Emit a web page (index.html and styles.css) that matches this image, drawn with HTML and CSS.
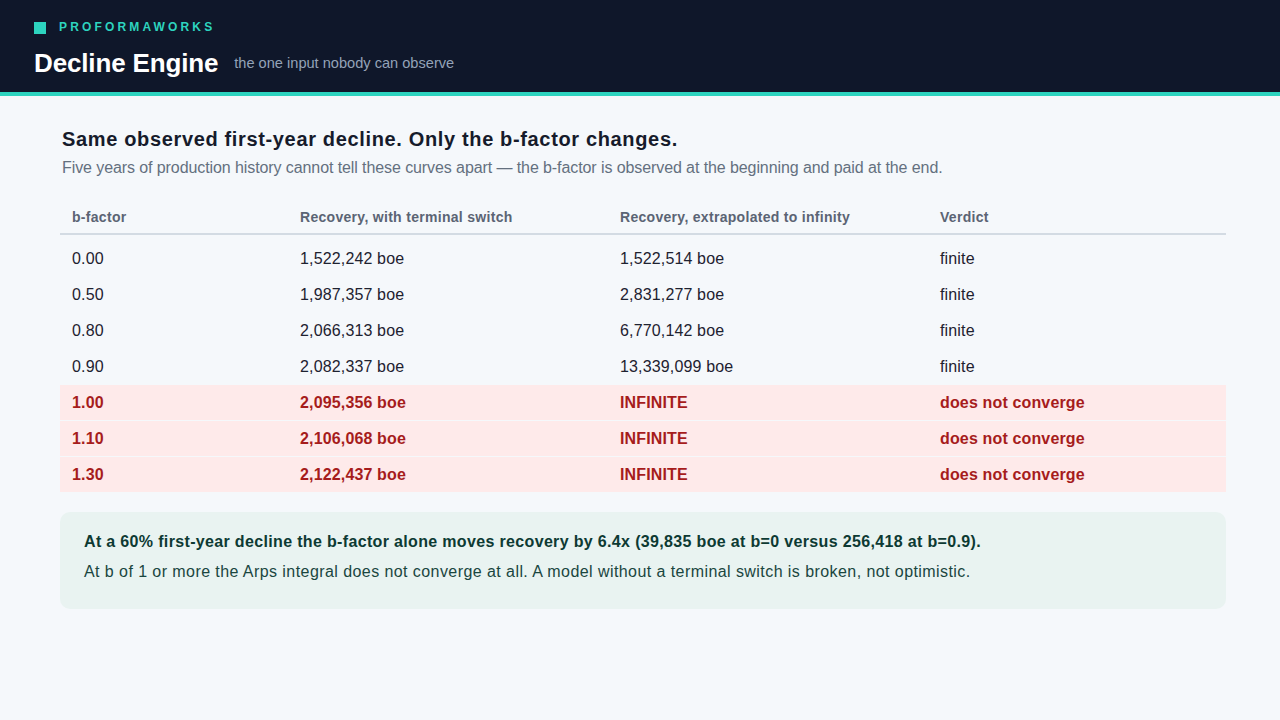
FILE: index.html
```html
<!DOCTYPE html>
<html lang="en">
<head>
<meta charset="utf-8">
<title>Decline Engine</title>
<link rel="stylesheet" href="styles.css">
</head>
<body>
<header class="topbar">
  <div class="brand">
    <span class="brand-mark"></span>
    <span class="brand-name">PROFORMAWORKS</span>
  </div>
  <div class="title-row">
    <h1 class="app-title">Decline Engine</h1>
    <span class="app-tagline">the one input nobody can observe</span>
  </div>
</header>

<main class="content">
  <h2 class="section-title">Same observed first-year decline. Only the b-factor changes.</h2>
  <p class="section-sub">Five years of production history cannot tell these curves apart — the b-factor is observed at the beginning and paid at the end.</p>

  <table class="data">
    <colgroup>
      <col class="c1"><col class="c2"><col class="c3"><col class="c4">
    </colgroup>
    <thead>
      <tr>
        <th>b-factor</th>
        <th>Recovery, with terminal switch</th>
        <th>Recovery, extrapolated to infinity</th>
        <th>Verdict</th>
      </tr>
    </thead>
    <tbody>
      <tr><td>0.00</td><td>1,522,242 boe</td><td>1,522,514 boe</td><td>finite</td></tr>
      <tr><td>0.50</td><td>1,987,357 boe</td><td>2,831,277 boe</td><td>finite</td></tr>
      <tr><td>0.80</td><td>2,066,313 boe</td><td>6,770,142 boe</td><td>finite</td></tr>
      <tr><td>0.90</td><td>2,082,337 boe</td><td>13,339,099 boe</td><td>finite</td></tr>
      <tr class="bad"><td>1.00</td><td>2,095,356 boe</td><td>INFINITE</td><td>does not converge</td></tr>
      <tr class="bad"><td>1.10</td><td>2,106,068 boe</td><td>INFINITE</td><td>does not converge</td></tr>
      <tr class="bad"><td>1.30</td><td>2,122,437 boe</td><td>INFINITE</td><td>does not converge</td></tr>
    </tbody>
  </table>

  <div class="callout">
    <p class="callout-lead">At a 60% first-year decline the b-factor alone moves recovery by 6.4x (39,835 boe at b=0 versus 256,418 at b=0.9).</p>
    <p class="callout-body">At b of 1 or more the Arps integral does not converge at all. A model without a terminal switch is broken, not optimistic.</p>
  </div>
</main>
</body>
</html>
```

FILE: styles.css
```css
* {
  box-sizing: border-box;
}

html, body {
  margin: 0;
  padding: 0;
}

body {
  background: #f5f8fb;
  font-family: "Liberation Sans", Arial, sans-serif;
  color: #1e2230;
  min-height: 720px;
}

/* ---------- header ---------- */
.topbar {
  background: #0f172a;
  height: 96px;
  padding: 22px 34px 0;
  border-bottom: 4px solid #2dd4bf;
}

.brand {
  display: flex;
  align-items: flex-start;
  gap: 13px;
  height: 12px;
}

.brand-mark {
  width: 12px;
  height: 12px;
  background: #2dd4bf;
  flex: none;
}

.brand-name {
  font-size: 12px;
  line-height: 12px;
  font-weight: 700;
  letter-spacing: 3.15px;
  color: #2dd4bf;
  margin-top: -1px;
}

.title-row {
  display: flex;
  align-items: center;
  gap: 16px;
  margin-top: 14px;
}

.app-title {
  margin: 0;
  font-size: 26px;
  line-height: 30px;
  font-weight: 700;
  letter-spacing: -0.15px;
  color: #ffffff;
}

.app-tagline {
  font-size: 14.6px;
  color: #94a3b8;
}

/* ---------- content ---------- */
.content {
  padding: 32px 54px 0 60px;
}

.section-title {
  margin: 0 0 8px 2px;
  font-size: 20px;
  line-height: 23px;
  font-weight: 700;
  letter-spacing: 0.65px;
  color: #161b2b;
}

.section-sub {
  margin: 0 0 24px 2px;
  font-size: 16px;
  line-height: 18px;
  letter-spacing: -0.09px;
  color: #64707f;
}

.data {
  width: 100%;
  border-collapse: collapse;
  table-layout: fixed;
}

.data .c1 { width: 228px; }
.data .c2 { width: 320px; }
.data .c3 { width: 320px; }

.data th {
  text-align: left;
  font-size: 14px;
  line-height: 16px;
  font-weight: 700;
  letter-spacing: 0.3px;
  color: #5b6474;
  padding: 8px 12px 8px;
  border-bottom: 2px solid #d3dbe3;
}

.data td {
  font-size: 16px;
  line-height: 19px;
  letter-spacing: 0.15px;
  padding: 8px 12px;
  height: 36px;
  border-bottom: 1px solid #f5f8fb;
  color: #1e2230;
}

.data tbody tr:first-child td {
  padding-top: 14px;
  height: 42px;
}

.data tr.bad td {
  background: #feeaea;
  color: #a61c1c;
  font-weight: 700;
}

/* ---------- callout ---------- */
.callout {
  margin-top: 19px;
  background: #e9f3f1;
  border-radius: 10px;
  padding: 18px 24px 25px;
  color: #123f38;
}

.callout p {
  margin: 0;
  font-size: 16px;
  line-height: 24px;
}

.callout-lead {
  font-weight: 700;
  letter-spacing: 0.34px;
  color: #0d3a33;
  margin-bottom: 6px !important;
}

.callout-body {
  letter-spacing: 0.43px;
  color: #1a463f;
}
```
